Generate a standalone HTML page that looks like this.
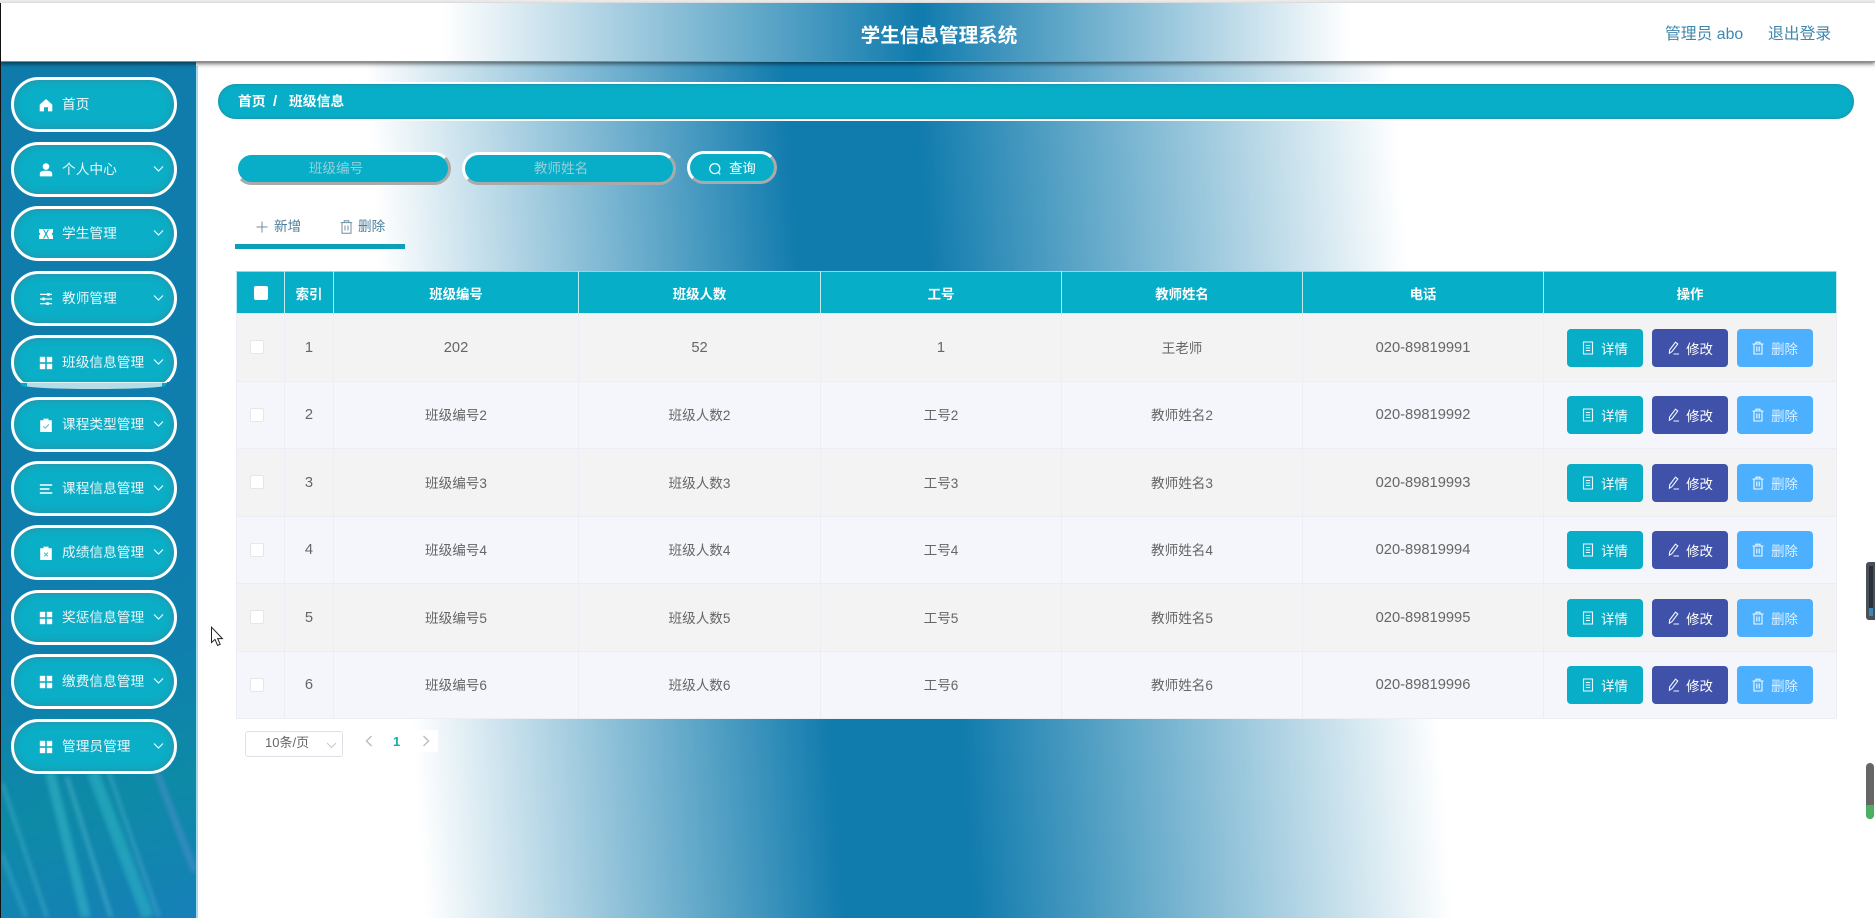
<!DOCTYPE html>
<html lang="zh-CN">
<head>
<meta charset="utf-8">
<title>学生信息管理系统</title>
<style>
*{box-sizing:border-box;margin:0;padding:0}
html,body{width:1875px;height:918px;overflow:hidden;background:#fff}
body{font-family:"Liberation Sans","Noto Sans CJK SC",sans-serif;color:#606266;font-size:13.6px}
#w{position:relative;width:1875px;height:918px;overflow:hidden;filter:blur(.3px)}
.a{position:absolute}
#bg{left:0;top:62px;width:1875px;height:856px;background:linear-gradient(86deg,#fff 424px,#107bad 843px,#107bad 970px,#fff 1450px)}
#top{left:0;top:0;width:1875px;height:3px;background:#ececec}
#hd{left:0;top:3px;width:1875px;height:59px;z-index:5;background:linear-gradient(90deg,#fff 442px,#107bad 919px,#fff 1350px);box-shadow:0 2px 4px rgba(0,0,0,.55);border-bottom:1px solid #8b8b8b}
#ttl{left:0;top:19px;width:1878px;text-align:center;font-size:19.6px;font-weight:700;color:#fff;line-height:28px}
.tr{top:21px;font-size:15.8px;color:#3f87ac;line-height:22px;white-space:nowrap}
#bk{left:0;top:3px;width:1px;height:915px;background:#111;z-index:9}
#sb{left:1px;top:62px;width:195px;height:856px;background:linear-gradient(165deg,#0f7bab 0%,#0f7fae 68%,#0d8aa6 84%,#1680b8 100%);overflow:hidden}
#ln{left:196px;top:66px;width:1.5px;height:852px;background:#a6d7ec}
.mi{position:absolute;left:11px;width:166px;height:55px;border:3px solid #fff;border-radius:28px;background:#0aaec6;box-shadow:inset 0 0 7px rgba(70,125,145,.75);color:#eaf8fb;line-height:49px;padding-left:48px;font-size:13.7px;white-space:nowrap}
.mi .ic{position:absolute;left:25px;top:18px;width:14px;height:14px;fill:#fff}
.mi .ch{position:absolute;left:139px;top:20px;width:11px;height:8px;fill:none;stroke:#eaf8fb;stroke-width:1.2}
#bc{left:218px;top:84px;width:1636px;height:35px;border-radius:18px;background:#08aec7;box-shadow:0 0 0 2px #fff,inset 0 0 3px rgba(60,110,130,.7);color:#fff;font-size:13.8px;font-weight:700;line-height:36px;white-space:nowrap}
.ipt{position:absolute;height:33px;border-style:solid;border-width:3px;border-color:#fff #aaa #aaa #fff;border-radius:17px;background:#08aec7;text-align:center;color:#93cfdc;font-size:13.6px;line-height:27px}
.hl{top:217px;color:#4d7f9c;font-size:13.6px;line-height:20px;white-space:nowrap}
#bar{left:235px;top:244px;width:170px;height:5px;background:#0b9fb8}
table{position:absolute;left:236px;top:271px;width:1600px;border-collapse:collapse;table-layout:fixed}
th{height:42px;background:#06aec7;color:#fff;font-weight:700;font-size:13.4px;border-left:1px solid #bfeaf1;border-right:1px solid #bfeaf1;border-top:1px solid #8ed9e6;text-align:center;padding:0}
td{text-align:center;padding:0 0 2px;border:1px solid #ebeef5;font-size:13.6px;color:#666}
td.n{font-size:14.7px;padding-bottom:0}
tr.o td{background:#f3f3f3}
tr.e td{background:#f4f6fb}
.r1{height:68px}.r2{height:67px}
.cb{display:inline-block;width:14px;height:14px;border:1px solid #e4e6ea;border-radius:2px;background:#fff;vertical-align:middle;margin-left:-7px}
th .cb{background:#fff;border:0;margin-left:0;margin-top:-1px}
.bs{display:flex;gap:9px;justify-content:center;padding-right:1px;padding-top:2px}
.b{display:flex;align-items:center;justify-content:center;width:76px;height:38px;border-radius:4px;color:#fff;font-size:13.4px;gap:6px}
.b svg{width:14px;height:14px;fill:none;stroke:#f0f8ff;stroke-width:1.1}
.bd{background:#08aec7}.be{background:#3f51a8}.bx{background:#4db0ff;color:#dff0ff}
#sel{left:245px;top:731px;width:98px;height:26px;border:1px solid #dcdfe6;border-radius:3px;background:#fff;font-size:13px;line-height:22px;padding-left:19px;color:#666}
#pg{left:360px;top:730px;width:78px;height:22px;background:#fff}
</style>
</head>
<body>
<div id="w">
<div id="bg" class="a"></div>
<div id="top" class="a"></div>
<div id="bk" class="a"></div>

<div id="hd" class="a">
  <div id="ttl" class="a">学生信息管理系统</div>
  <div class="a tr" style="left:1665px">管理员 abo</div>
  <div class="a tr" style="left:1768px">退出登录</div>
</div>

<div id="sb" class="a">
  <svg width="195" height="856" style="position:absolute;left:0;top:0;filter:blur(2.2px)" fill="none">
    <g>
      <path d="M1 721L46 855" stroke="#4cb4cc" stroke-opacity=".6" stroke-width="3"/>
      <path d="M49 711L85 855" stroke="#32b0c4" stroke-opacity=".65" stroke-width="10"/>
      <path d="M66 715L110 855" stroke="#5cbcd4" stroke-opacity=".5" stroke-width="4"/>
      <path d="M92 711L147 855" stroke="#2fb2c4" stroke-opacity=".6" stroke-width="12"/>
      <path d="M108 711L158 855" stroke="#65bfd8" stroke-opacity=".45" stroke-width="3"/>
      <path d="M156 711L194 810" stroke="#4a90c8" stroke-opacity=".6" stroke-width="7"/>
      <path d="M0 790L25 855" stroke="#39a6c8" stroke-opacity=".55" stroke-width="5"/>
    </g>
  </svg>
</div>
<div id="ln" class="a"></div>

<div class="mi" style="top:77px">首页<svg class="ic" viewBox="0 0 14 14"><path d="M7 1L13.3 6.6V13.4H9V9.2H5V13.4H.7V6.6Z"/></svg></div>
<div class="mi" style="top:141.5px">个人中心<svg class="ic" viewBox="0 0 14 14"><circle cx="7" cy="3.6" r="3.3"/><path d="M.8 13.4V10.5C.8 8.7 3 7.8 7 7.8S13.2 8.7 13.2 10.5V13.4Z"/></svg><svg class="ch" viewBox="0 0 11 8"><path d="M1 1.5L5.5 6L10 1.5"/></svg></div>
<div class="mi" style="top:206px">学生管理<svg class="ic" viewBox="0 0 14 14"><path d="M0 2H14V5.2L12.6 7L14 8.8V12H0V8.8L1.4 7L0 5.2Z"/><path d="M4.5 2.5L7 7L4.5 11.5M9.5 2.5L7 7L9.5 11.5" fill="none" stroke="#0aaec6" stroke-width="1.1"/></svg><svg class="ch" viewBox="0 0 11 8"><path d="M1 1.5L5.5 6L10 1.5"/></svg></div>
<div class="mi" style="top:270.5px">教师管理<svg class="ic" viewBox="0 0 14 14"><path d="M1 2.4H8.2M10.8 2.4H13M1 7H3.2M5.8 7H13M1 11.6H7.2M9.8 11.6H13" stroke="#fff" stroke-width="1.2" fill="none"/><rect x="8.2" y="1" width="2.6" height="2.8"/><rect x="3.2" y="5.6" width="2.6" height="2.8"/><rect x="7.2" y="10.2" width="2.6" height="2.8"/></svg><svg class="ch" viewBox="0 0 11 8"><path d="M1 1.5L5.5 6L10 1.5"/></svg></div>
<div class="mi" style="top:335px">班级信息管理<svg class="ic" viewBox="0 0 14 14"><rect x=".8" y=".8" width="5.4" height="5.4"/><rect x="7.8" y=".8" width="5.4" height="5.4"/><rect x=".8" y="7.8" width="5.4" height="5.4"/><rect x="7.8" y="7.8" width="5.4" height="5.4"/></svg><svg class="ch" viewBox="0 0 11 8"><path d="M1 1.5L5.5 6L10 1.5"/></svg></div>
<div class="a" style="left:8px;top:382px;width:172px;height:15px;background:#0f7dad"></div>
<div class="a" style="left:20px;top:382px;width:147px;height:5px;background:#0ba7c0;border-radius:0 0 8px 8px;border-top:1px solid #dff4f7"></div>
<div class="a" style="left:27px;top:383px;width:135px;height:6px;background:#b4dde7;border-radius:0 0 50% 50%"></div>
<div class="mi" style="top:397px">课程类型管理<svg class="ic" viewBox="0 0 14 14"><path d="M1.2 2.2H4.5V.6H9.5V2.2H12.8V14H1.2Z"/><path d="M4.2 8.2L6.3 10.2L9.8 6.4" fill="none" stroke="#4bbccf" stroke-width="1"/></svg><svg class="ch" viewBox="0 0 11 8"><path d="M1 1.5L5.5 6L10 1.5"/></svg></div>
<div class="mi" style="top:460.5px">课程信息管理<svg class="ic" viewBox="0 0 14 14"><path d="M.8 2.2H13.2V3.8H.8ZM.8 6.2H10.5V7.8H.8ZM.8 10.2H13.2V11.8H.8Z"/></svg><svg class="ch" viewBox="0 0 11 8"><path d="M1 1.5L5.5 6L10 1.5"/></svg></div>
<div class="mi" style="top:525px">成绩信息管理<svg class="ic" viewBox="0 0 14 14"><path d="M1.2 2.2H4.5V.6H9.5V2.2H12.8V14H1.2Z"/><path d="M5 6.6L9 10.4M9 6.6L5 10.4" fill="none" stroke="#4bbccf" stroke-width="1"/></svg><svg class="ch" viewBox="0 0 11 8"><path d="M1 1.5L5.5 6L10 1.5"/></svg></div>
<div class="mi" style="top:589.5px">奖惩信息管理<svg class="ic" viewBox="0 0 14 14"><rect x=".8" y=".8" width="5.4" height="5.4"/><rect x="7.8" y=".8" width="5.4" height="5.4"/><rect x=".8" y="7.8" width="5.4" height="5.4"/><rect x="7.8" y="7.8" width="5.4" height="5.4"/></svg><svg class="ch" viewBox="0 0 11 8"><path d="M1 1.5L5.5 6L10 1.5"/></svg></div>
<div class="mi" style="top:654px">缴费信息管理<svg class="ic" viewBox="0 0 14 14"><rect x=".8" y=".8" width="5.4" height="5.4"/><rect x="7.8" y=".8" width="5.4" height="5.4"/><rect x=".8" y="7.8" width="5.4" height="5.4"/><rect x="7.8" y="7.8" width="5.4" height="5.4"/></svg><svg class="ch" viewBox="0 0 11 8"><path d="M1 1.5L5.5 6L10 1.5"/></svg></div>
<div class="mi" style="top:718.5px">管理员管理<svg class="ic" viewBox="0 0 14 14"><rect x=".8" y=".8" width="5.4" height="5.4"/><rect x="7.8" y=".8" width="5.4" height="5.4"/><rect x=".8" y="7.8" width="5.4" height="5.4"/><rect x="7.8" y="7.8" width="5.4" height="5.4"/></svg><svg class="ch" viewBox="0 0 11 8"><path d="M1 1.5L5.5 6L10 1.5"/></svg></div>

<div id="bc" class="a"><span class="a" style="left:20px">首页</span><span class="a" style="left:55px;font-size:15px">/</span><span class="a" style="left:71px">班级信息</span></div>

<div class="ipt" style="left:235px;top:152px;width:216px;padding-right:14px">班级编号</div>
<div class="ipt" style="left:462px;top:152px;width:214px;padding-right:16px">教师姓名</div>
<div class="ipt" style="left:687px;top:151px;width:90px;color:#fff;text-align:left;padding-left:39px;line-height:29px;font-size:13.4px">查询<svg class="a" style="left:18px;top:8px;width:14px;height:14px" viewBox="0 0 14 14" fill="none" stroke="#fff" stroke-width="1.2"><circle cx="6.8" cy="6.6" r="5"/><path d="M10.4 10.4L12.2 12.4"/></svg></div>

<svg class="a" style="left:256px;top:221px;width:12px;height:12px" viewBox="0 0 12 12" fill="none" stroke="#6d8ea4" stroke-width="1"><path d="M6 .5V11.5M.5 6H11.5"/></svg>
<div class="a hl" style="left:274px">新增</div>
<svg class="a" style="left:340px;top:220px;width:13px;height:14px" viewBox="0 0 13 14" fill="none" stroke="#6d8ea4" stroke-width="1"><path d="M.8 2.6H12.2M4.2 2.6V.8H8.8V2.6M2 2.6V13.2H11V2.6M5 5.5V10.5M8 5.5V10.5"/></svg>
<div class="a hl" style="left:358px">删除</div>
<div id="bar" class="a"></div>

<table>
<colgroup><col style="width:48px"><col style="width:49px"><col style="width:245px"><col style="width:242px"><col style="width:241px"><col style="width:241px"><col style="width:241px"><col style="width:293px"></colgroup>
<thead><tr><th><span class="cb"></span></th><th>索引</th><th>班级编号</th><th>班级人数</th><th>工号</th><th>教师姓名</th><th>电话</th><th>操作</th></tr></thead>
<tbody>
<tr class="o r1"><td><span class="cb"></span></td><td class="n">1</td><td class="n">202</td><td class="n">52</td><td class="n">1</td><td>王老师</td><td class="n">020-89819991</td><td><div class="bs"><div class="b bd"><svg viewBox="0 0 14 14"><path d="M2.5 1H11.5V13H2.5ZM4.8 4.5H9.2M4.8 7H9.2M4.8 9.5H9.2"/></svg>详情</div><div class="b be"><svg viewBox="0 0 14 14"><path d="M9.5 1.2L11.8 3L6 10.6L3.4 12.2L3.6 9ZM7.5 13H13"/></svg>修改</div><div class="b bx"><svg viewBox="0 0 14 14"><path d="M1.5 3H12.5M5 3V1.2H9V3M3 3V13H11V3M5.8 5.5V10.5M8.2 5.5V10.5"/></svg>删除</div></div></td></tr>
<tr class="e r2"><td><span class="cb"></span></td><td class="n">2</td><td>班级编号2</td><td>班级人数2</td><td>工号2</td><td>教师姓名2</td><td class="n">020-89819992</td><td><div class="bs"><div class="b bd"><svg viewBox="0 0 14 14"><path d="M2.5 1H11.5V13H2.5ZM4.8 4.5H9.2M4.8 7H9.2M4.8 9.5H9.2"/></svg>详情</div><div class="b be"><svg viewBox="0 0 14 14"><path d="M9.5 1.2L11.8 3L6 10.6L3.4 12.2L3.6 9ZM7.5 13H13"/></svg>修改</div><div class="b bx"><svg viewBox="0 0 14 14"><path d="M1.5 3H12.5M5 3V1.2H9V3M3 3V13H11V3M5.8 5.5V10.5M8.2 5.5V10.5"/></svg>删除</div></div></td></tr>
<tr class="o r1"><td><span class="cb"></span></td><td class="n">3</td><td>班级编号3</td><td>班级人数3</td><td>工号3</td><td>教师姓名3</td><td class="n">020-89819993</td><td><div class="bs"><div class="b bd"><svg viewBox="0 0 14 14"><path d="M2.5 1H11.5V13H2.5ZM4.8 4.5H9.2M4.8 7H9.2M4.8 9.5H9.2"/></svg>详情</div><div class="b be"><svg viewBox="0 0 14 14"><path d="M9.5 1.2L11.8 3L6 10.6L3.4 12.2L3.6 9ZM7.5 13H13"/></svg>修改</div><div class="b bx"><svg viewBox="0 0 14 14"><path d="M1.5 3H12.5M5 3V1.2H9V3M3 3V13H11V3M5.8 5.5V10.5M8.2 5.5V10.5"/></svg>删除</div></div></td></tr>
<tr class="e r2"><td><span class="cb"></span></td><td class="n">4</td><td>班级编号4</td><td>班级人数4</td><td>工号4</td><td>教师姓名4</td><td class="n">020-89819994</td><td><div class="bs"><div class="b bd"><svg viewBox="0 0 14 14"><path d="M2.5 1H11.5V13H2.5ZM4.8 4.5H9.2M4.8 7H9.2M4.8 9.5H9.2"/></svg>详情</div><div class="b be"><svg viewBox="0 0 14 14"><path d="M9.5 1.2L11.8 3L6 10.6L3.4 12.2L3.6 9ZM7.5 13H13"/></svg>修改</div><div class="b bx"><svg viewBox="0 0 14 14"><path d="M1.5 3H12.5M5 3V1.2H9V3M3 3V13H11V3M5.8 5.5V10.5M8.2 5.5V10.5"/></svg>删除</div></div></td></tr>
<tr class="o r1"><td><span class="cb"></span></td><td class="n">5</td><td>班级编号5</td><td>班级人数5</td><td>工号5</td><td>教师姓名5</td><td class="n">020-89819995</td><td><div class="bs"><div class="b bd"><svg viewBox="0 0 14 14"><path d="M2.5 1H11.5V13H2.5ZM4.8 4.5H9.2M4.8 7H9.2M4.8 9.5H9.2"/></svg>详情</div><div class="b be"><svg viewBox="0 0 14 14"><path d="M9.5 1.2L11.8 3L6 10.6L3.4 12.2L3.6 9ZM7.5 13H13"/></svg>修改</div><div class="b bx"><svg viewBox="0 0 14 14"><path d="M1.5 3H12.5M5 3V1.2H9V3M3 3V13H11V3M5.8 5.5V10.5M8.2 5.5V10.5"/></svg>删除</div></div></td></tr>
<tr class="e r2"><td><span class="cb"></span></td><td class="n">6</td><td>班级编号6</td><td>班级人数6</td><td>工号6</td><td>教师姓名6</td><td class="n">020-89819996</td><td><div class="bs"><div class="b bd"><svg viewBox="0 0 14 14"><path d="M2.5 1H11.5V13H2.5ZM4.8 4.5H9.2M4.8 7H9.2M4.8 9.5H9.2"/></svg>详情</div><div class="b be"><svg viewBox="0 0 14 14"><path d="M9.5 1.2L11.8 3L6 10.6L3.4 12.2L3.6 9ZM7.5 13H13"/></svg>修改</div><div class="b bx"><svg viewBox="0 0 14 14"><path d="M1.5 3H12.5M5 3V1.2H9V3M3 3V13H11V3M5.8 5.5V10.5M8.2 5.5V10.5"/></svg>删除</div></div></td></tr>
</tbody>
</table>

<div id="sel" class="a">10条/页<svg class="a" style="left:80px;top:10px;width:11px;height:7px" viewBox="0 0 11 7" fill="none" stroke="#c4c8cf" stroke-width="1"><path d="M1 1L5.5 5.5L10 1"/></svg></div>
<div id="pg" class="a">
  <svg class="a" style="left:5px;top:5px;width:8px;height:12px" viewBox="0 0 8 12" fill="none" stroke="#b8bcc4" stroke-width="1.4"><path d="M6.5 1L1.5 6L6.5 11"/></svg>
  <div class="a" style="left:33px;top:3px;font-size:13px;font-weight:700;color:#14b0a0;line-height:18px">1</div>
  <svg class="a" style="left:62px;top:5px;width:8px;height:12px" viewBox="0 0 8 12" fill="none" stroke="#b8bcc4" stroke-width="1.4"><path d="M1.5 1L6.5 6L1.5 11"/></svg>
</div>

<svg class="a" style="left:210px;top:626px;width:15px;height:21px" viewBox="0 0 15 21"><path d="M1.5 1.2V16.5L5 13.4L7.6 19.4L10.2 18.2L7.6 12.6H12.4Z" fill="#fff" stroke="#222" stroke-width="1"/></svg>

<div class="a" style="left:1866px;top:562px;width:9px;height:58px;background:#4a5058;border-radius:3px 0 0 3px"></div>
<div class="a" style="left:1869px;top:566px;width:4px;height:50px;background:#2b3138"></div>
<div class="a" style="left:1869px;top:608px;width:4px;height:8px;background:#3c87b8"></div>
<div class="a" style="left:1866px;top:763px;width:8px;height:56px;background:#666;border-radius:4px"></div>
<div class="a" style="left:1866px;top:805px;width:8px;height:14px;background:#4caf62;border-radius:0 0 4px 4px"></div>
</div>
</body>
</html>
